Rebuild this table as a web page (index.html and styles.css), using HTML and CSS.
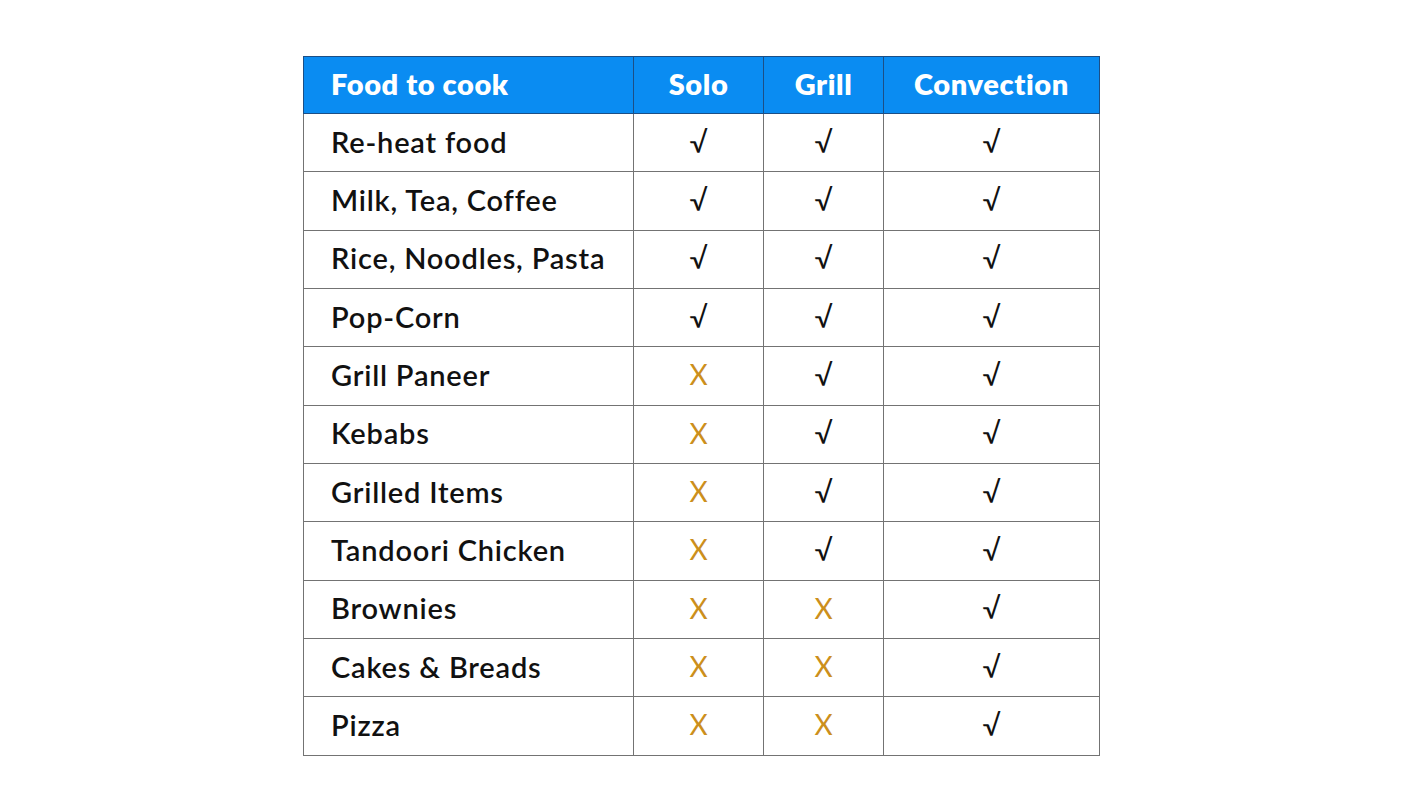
FILE: index.html
```html
<!DOCTYPE html>
<html>
<head>
<meta charset="utf-8">
<link rel="stylesheet" href="styles.css">
</head>
<body>
<div class="page">
<table class="cook">
<colgroup><col class="c1"><col class="c2"><col class="c3"><col class="c4"></colgroup>
<thead>
<tr><th class="name">Food to cook</th><th>Solo</th><th>Grill</th><th>Convection</th></tr>
</thead>
<tbody>
<tr><td class="name">Re-heat food</td><td class="y">√</td><td class="y">√</td><td class="y">√</td></tr>
<tr><td class="name">Milk, Tea, Coffee</td><td class="y">√</td><td class="y">√</td><td class="y">√</td></tr>
<tr><td class="name">Rice, Noodles, Pasta</td><td class="y">√</td><td class="y">√</td><td class="y">√</td></tr>
<tr><td class="name">Pop-Corn</td><td class="y">√</td><td class="y">√</td><td class="y">√</td></tr>
<tr><td class="name">Grill Paneer</td><td class="n">X</td><td class="y">√</td><td class="y">√</td></tr>
<tr><td class="name">Kebabs</td><td class="n">X</td><td class="y">√</td><td class="y">√</td></tr>
<tr><td class="name">Grilled Items</td><td class="n">X</td><td class="y">√</td><td class="y">√</td></tr>
<tr><td class="name">Tandoori Chicken</td><td class="n">X</td><td class="y">√</td><td class="y">√</td></tr>
<tr><td class="name">Brownies</td><td class="n">X</td><td class="n">X</td><td class="y">√</td></tr>
<tr><td class="name">Cakes &amp; Breads</td><td class="n">X</td><td class="n">X</td><td class="y">√</td></tr>
<tr><td class="name">Pizza</td><td class="n">X</td><td class="n">X</td><td class="y">√</td></tr>
</tbody>
</table>
</div>
</body>
</html>
```
FILE: styles.css
```css
html, body {
  margin: 0;
  padding: 0;
  background: #ffffff;
}
.page {
  display: flex;
  justify-content: center;
  padding-top: 56px;
}
.cook {
  border-collapse: collapse;
  table-layout: fixed;
  width: 796px;
  font-family: Lato, "Liberation Sans", sans-serif;
  margin-left: 1px;
}
.c1 { width: 330px; }
.c2 { width: 130px; }
.c3 { width: 120px; }
.c4 { width: 216px; }
.cook th {
  background: #0a8cf2;
  color: #ffffff;
  font-weight: 800;
  font-size: 29px;
  letter-spacing: 0.6px;
  height: 53px;
  padding: 0 0 3px 0;
  border: 1px solid #1c4f86;
  text-align: center;
  vertical-align: middle;
}
.cook td {
  height: 54.33px;
  padding: 0 0 3px 0;
  border: 1px solid #737373;
  text-align: center;
  vertical-align: middle;
  font-size: 29px;
  color: #111111;
}
.cook .name {
  text-align: left;
  padding-left: 27px;
}
.cook td.name {
  font-weight: 600;
  letter-spacing: 0.8px;
}
.cook td.y {
  font-family: Lato, "DejaVu Sans", sans-serif;
  font-size: 29px;
}
.cook td.n {
  color: #cc8f1c;
  font-weight: 400;
  font-size: 28px;
}
```
